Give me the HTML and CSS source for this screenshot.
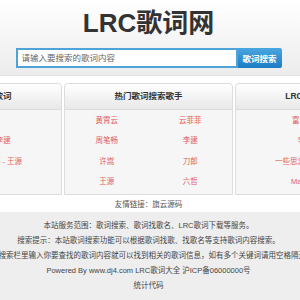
FILE: index.html
```html
<!DOCTYPE html>
<html lang="zh-CN">

<head>
    <meta charset="UTF-8">
    <meta name="viewport" content="width=device-width, initial-scale=1.0">
    <title>LRC歌词网</title>
    <link rel="stylesheet" href="styles.css">
</head>

<body>
    <div class="header">
        <h1>LRC歌词网</h1>
        <form class="search" onsubmit="return false">
            <input type="text" placeholder="请输入要搜索的歌词内容">
            <button type="submit">歌词搜索</button>
        </form>
    </div>

    <div class="main">
        <div class="boxes">
            <div class="box">
                <div class="box-title">最近热门搜索歌词</div>
                <ul class="list">
                    <li><a href="#">后来 - 刘若英</a></li>
                    <li><a href="#">假如爱有天意 - 李建</a></li>
                    <li><a href="#">致我们单纯的小美好 - 王源</a></li>
                    <li><a href="#">演员 - 薛之谦</a></li>
                </ul>
            </div>
            <div class="box">
                <div class="box-title">热门歌词搜索歌手</div>
                <ul class="list two-col">
                    <li><a href="#">黄霄云</a></li>
                    <li><a href="#">云菲菲</a></li>
                    <li><a href="#">周笔畅</a></li>
                    <li><a href="#">李建</a></li>
                    <li><a href="#">许嵩</a></li>
                    <li><a href="#">刀郎</a></li>
                    <li><a href="#">王源</a></li>
                    <li><a href="#">六哲</a></li>
                </ul>
            </div>
            <div class="box">
                <div class="box-title">LRC歌词下载排行</div>
                <ul class="list">
                    <li><a href="#">富士山下-陈奕迅</a></li>
                    <li><a href="#">李白 - 李荣浩</a></li>
                    <li><a href="#">一些思念一些回忆 - 张学友</a></li>
                    <li><a href="#">Mariage d'Amour</a></li>
                </ul>
            </div>
        </div>
        <div class="links">友情链接：<a href="#">旗云源码</a></div>
    </div>

    <div class="footer">
        <p>本站服务范围：歌词搜索、歌词找歌名、LRC歌词下载等服务。</p>
        <p>搜索提示：本站歌词搜索功能可以根据歌词找歌、找歌名等支持歌词内容搜索。</p>
        <p>在搜索栏里输入你要查找的歌词内容就可以找到相关的歌词信息，如有多个关键词请用空格隔开</p>
        <p>Powered By www.dj4.com LRC歌词大全 沪ICP备06000000号</p>
        <p>统计代码</p>
    </div>
</body>

</html>
```

FILE: styles.css
```css
body {
    margin: 0;
    font-family: "Liberation Sans", "Noto Sans CJK SC", sans-serif;
    background: #eeeeee;
    color: #444;
    overflow: hidden;
}

a {
    text-decoration: none;
}

.header {
    background: linear-gradient(#ffffff, #ececec);
    border-bottom: 1px solid #e2e2e2;
    padding: 8px 3px 7px 0;
    text-align: center;
}

.header h1 {
    margin: 0;
    font-size: 26px;
    line-height: 30px;
    color: #333;
}

.search {
    display: flex;
    justify-content: center;
    margin: 10px 0 0;
}

.search input {
    width: 222px;
    height: 20px;
    box-sizing: border-box;
    border: 2px solid #4ea3d8;
    padding: 0 4px;
    font-size: 8.5px;
    font-family: inherit;
    background: #fff;
    outline: none;
}

.search input::placeholder {
    color: #666;
}

.search button {
    width: 44px;
    height: 20px;
    border: none;
    border-radius: 0 2px 2px 0;
    background: linear-gradient(#4aa6e0, #1d7cc2);
    color: #fff;
    font-size: 8.5px;
    font-weight: bold;
    font-family: inherit;
    padding: 0;
    cursor: pointer;
}

.main {
    background: #fff;
    padding: 7px 3px 0 0;
}

.boxes {
    display: flex;
    justify-content: center;
    gap: 2px;
}

.box {
    flex: 0 0 169px;
    box-sizing: border-box;
    border: 1px solid #dcdcdc;
    border-radius: 4px 4px 0 0;
    background: #f6f6f6;
}

.box-title {
    height: 25px;
    line-height: 25px;
    text-align: center;
    font-size: 8.5px;
    font-weight: bold;
    color: #333;
    white-space: nowrap;
    background: linear-gradient(#ffffff, #e8e8e8);
    border-bottom: 1px solid #dcdcdc;
    border-radius: 4px 4px 0 0;
}

.list {
    list-style: none;
    margin: 0;
    padding: 0.5px 0 1.5px;
}

.list li {
    line-height: 20.5px;
    text-align: center;
    font-size: 7.5px;
    white-space: nowrap;
}

.list a {
    color: #e25d5d;
}

.two-col {
    display: grid;
    grid-template-columns: 1fr 1fr;
}

.links {
    text-align: center;
    font-size: 7.5px;
    line-height: 15px;
    padding-top: 2px;
    color: #555;
}

.links a {
    color: #555;
}

.footer {
    display: flex;
    flex-direction: column;
    align-items: center;
    padding: 5.5px 3px 0 0;
}

.footer p {
    margin: 0;
    font-size: 7.5px;
    line-height: 15px;
    white-space: nowrap;
    color: #444;
}
```
